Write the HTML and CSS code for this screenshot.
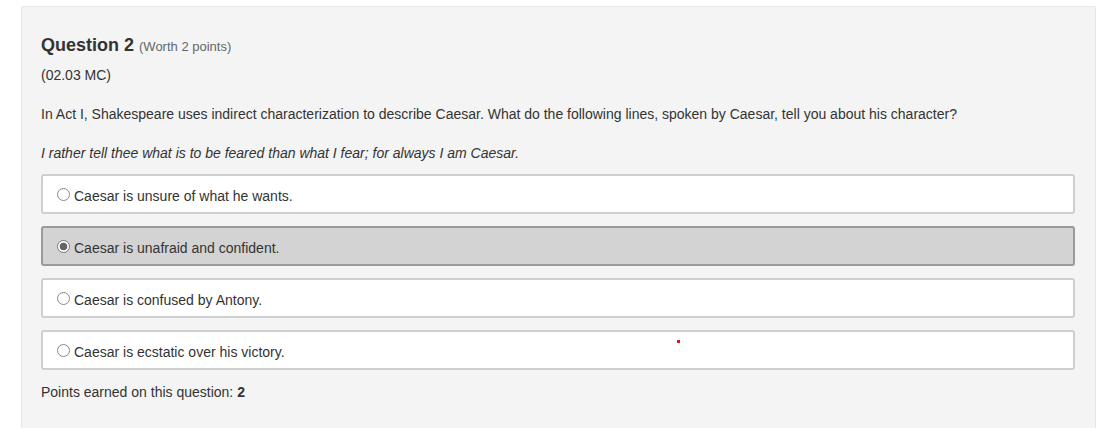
FILE: index.html
```html
<!DOCTYPE html>
<html>
<head>
<meta charset="utf-8">
<link rel="stylesheet" href="styles.css">
</head>
<body>
<div class="page">
  <div class="panel">
    <h2 class="title">Question 2 <span class="worth">(Worth 2 points)</span></h2>
    <p class="code">(02.03 MC)</p>
    <p class="prompt">In Act I, Shakespeare uses indirect characterization to describe Caesar. What do the following lines, spoken by Caesar, tell you about his character?</p>
    <p class="quote">I rather tell thee what is to be feared than what I fear; for always I am Caesar.</p>
    <div class="options">
      <div class="option"><span class="radio"></span><span>Caesar is unsure of what he wants.</span></div>
      <div class="option selected"><span class="radio checked"></span><span>Caesar is unafraid and confident.</span></div>
      <div class="option"><span class="radio"></span><span>Caesar is confused by Antony.</span></div>
      <div class="option"><span class="radio"></span><span>Caesar is ecstatic over his victory.</span><span class="dot"></span></div>
    </div>
    <p class="points">Points earned on this question: <b>2</b></p>
  </div>
</div>
</body>
</html>
```
FILE: styles.css
```css
html, body {
  margin: 0;
  padding: 0;
  background: #ffffff;
}
body {
  font-family: "Liberation Sans", Arial, sans-serif;
  font-size: 14px;
  line-height: 20px;
  color: #333333;
}
.page {
  padding: 6px 20px 0 21px;
}
.panel {
  background: #f4f4f4;
  border: 1px solid #e6e6e6;
  border-bottom: none;
  border-radius: 2px 2px 0 0;
  padding: 28px 20px 26px 19px;
}
.title {
  margin: 0;
  font-size: 18px;
  font-weight: bold;
  line-height: 20px;
  color: #333333;
}
.worth {
  font-size: 13px;
  font-weight: normal;
  color: #666666;
}
.code {
  margin: 8px 0 0 0;
}
.prompt {
  margin: 19px 0 0 0;
}
.quote {
  margin: 19px 0 0 0;
  font-style: italic;
}
.options {
  margin-top: 11px;
  display: flex;
  flex-direction: column;
  gap: 12px;
}
.option {
  position: relative;
  box-sizing: border-box;
  height: 40px;
  display: flex;
  align-items: center;
  gap: 4px;
  padding: 3px 14px 0 14px;
  background: #ffffff;
  border: 2px solid #cfcfcf;
  border-radius: 3px;
}
.option.selected {
  background: #d3d3d3;
  border-color: #9a9a9a;
}
.radio {
  width: 11px;
  height: 11px;
  border: 1px solid #8a8a8a;
  border-radius: 50%;
  background: #ffffff;
  flex: none;
  margin-top: -2px;
}
.radio.checked {
  background: radial-gradient(circle, #666666 0 3.5px, #ffffff 4.2px);
  border-color: #777777;
}
.dot {
  position: absolute;
  left: 634px;
  top: 8px;
  width: 3px;
  height: 3px;
  background: #e8101e;
}
.points {
  margin: 12px 0 0 0;
}
.points b {
  font-weight: bold;
}
```
